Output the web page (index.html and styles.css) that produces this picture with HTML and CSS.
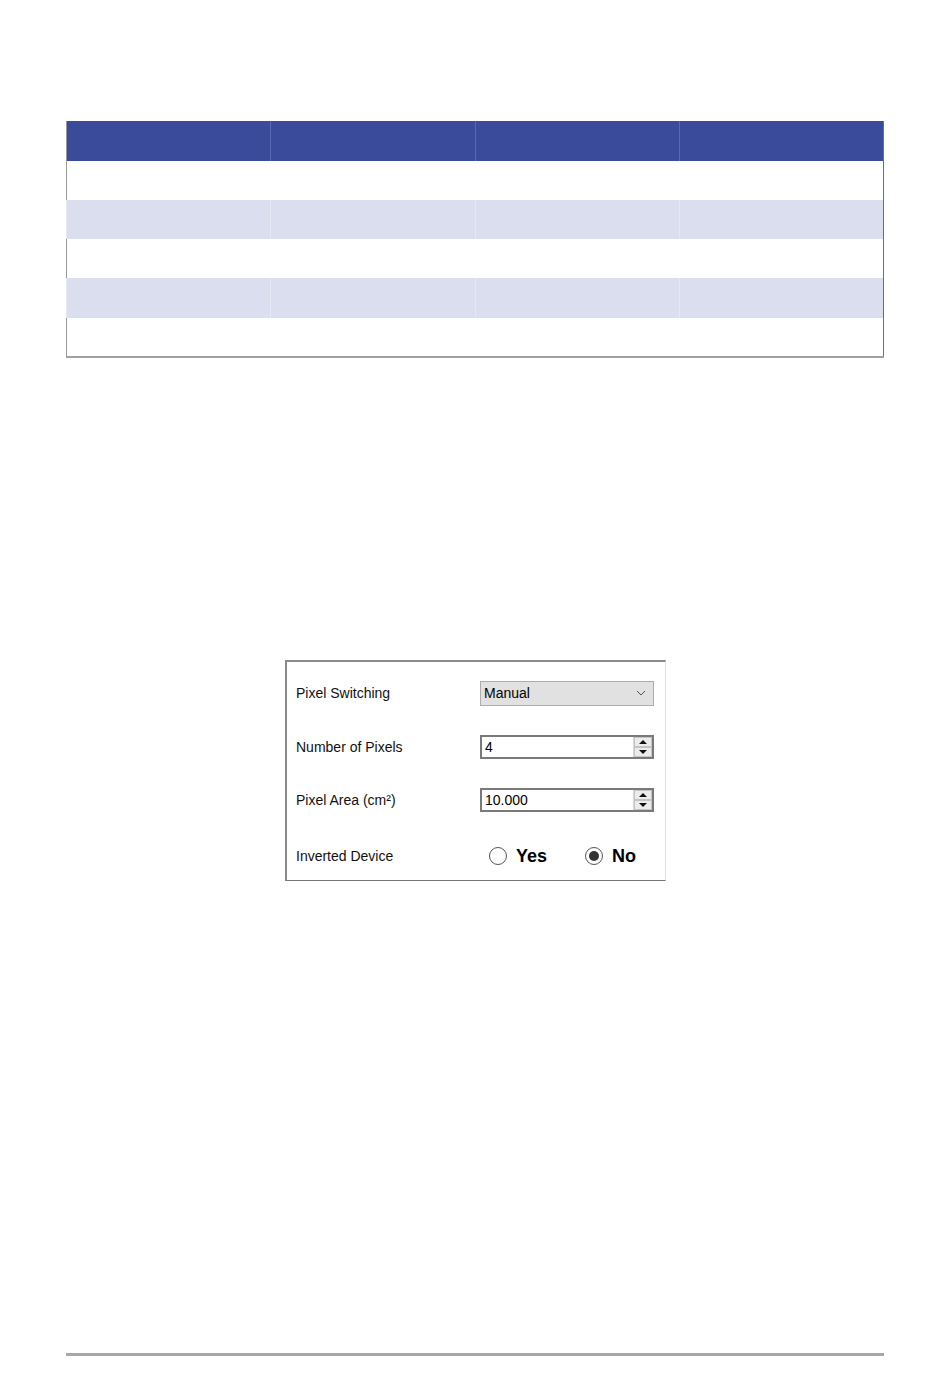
FILE: index.html
```html
<html>

<head>
  <link rel="stylesheet" href="styles.css">
</head>

<body>
  <div class="page">
    <table class="grid">
      <thead>
        <tr>
          <th></th>
          <th></th>
          <th></th>
          <th></th>
        </tr>
      </thead>
      <tbody>
        <tr><td></td><td></td><td></td><td></td></tr>
        <tr><td></td><td></td><td></td><td></td></tr>
        <tr><td></td><td></td><td></td><td></td></tr>
        <tr><td></td><td></td><td></td><td></td></tr>
        <tr><td></td><td></td><td></td><td></td></tr>
      </tbody>
    </table>

    <div class="panel">
      <div class="row">
        <span class="label">Pixel Switching</span>
        <div class="combo">
          <span>Manual</span>
          <svg class="chevron" viewBox="0 0 10 6" width="10" height="6">
            <path d="M1 1l4 4 4-4" fill="none" stroke="#555" stroke-width="1"></path>
          </svg>
        </div>
      </div>
      <div class="row">
        <span class="label">Number of Pixels</span>
        <div class="spin">
          <span class="spin-value">4</span>
          <div class="spin-buttons">
            <div class="spin-btn"><span class="arrow-up"></span></div>
            <div class="spin-btn"><span class="arrow-down"></span></div>
          </div>
        </div>
      </div>
      <div class="row">
        <span class="label">Pixel Area (cm²)</span>
        <div class="spin">
          <span class="spin-value">10.000</span>
          <div class="spin-buttons">
            <div class="spin-btn"><span class="arrow-up"></span></div>
            <div class="spin-btn"><span class="arrow-down"></span></div>
          </div>
        </div>
      </div>
      <div class="row row-last">
        <span class="label">Inverted Device</span>
        <div class="radios">
          <label class="radio"><span class="dot"></span>Yes</label>
          <label class="radio"><span class="dot checked"></span>No</label>
        </div>
      </div>
    </div>

    <div class="spacer"></div>
    <div class="footer-line"></div>
  </div>
</body>

</html>
```

FILE: styles.css
```css
* {
  margin: 0;
  padding: 0;
  box-sizing: border-box;
}

body {
  background: #fff;
  font-family: "Liberation Sans", Arial, sans-serif;
  color: #000;
}

.page {
  width: 950px;
  height: 1397px;
  display: flex;
  flex-direction: column;
  padding: 121px 66px 0 66px;
}

/* striped table, empty cells */
.grid {
  width: 818px;
  border-collapse: collapse;
  table-layout: fixed;
  border-left: 1px solid #9a9a9a;
  border-right: 1px solid #6f6f6f;
  border-bottom: 2px solid #a0a0a0;
}

.grid th {
  height: 40px;
  background: #394b9a;
  border-left: 1px solid #5869b0;
}

.grid th:first-child,
.grid td:first-child {
  border-left: none;
}

.grid td {
  height: 39px;
  background: #fff;
}

.grid tbody tr:nth-child(4) td {
  height: 40px;
}

.grid tbody tr:nth-child(even) td {
  background: #dadeef;
  border-left: 1px solid #e5e8f4;
}

.panel {
  align-self: flex-start;
  margin: 302px 0 0 219px;
  width: 381px;
  height: 221px;
  border-top: 2px solid #8a8a8a;
  border-left: 2px solid #8a8a8a;
  border-bottom: 1px solid #777;
  border-right: 1px solid #e0e0e0;
  padding: 4px 0 0 9px;
  display: flex;
  flex-direction: column;
  font-size: 14px;
}

.row {
  height: 54px;
  display: flex;
  align-items: center;
}

.row:nth-child(3) {
  height: 52px;
}

.row-last {
  flex: 1;
  padding-top: 6px;
}

.label {
  width: 184px;
  color: #111;
}

.combo {
  width: 174px;
  height: 25px;
  background: #e1e1e1;
  border: 1px solid #adadad;
  display: flex;
  align-items: center;
  justify-content: space-between;
  padding: 0 7px 0 3px;
}

.spin {
  width: 174px;
  height: 24px;
  border: 2px solid #7a7a7a;
  display: flex;
  align-items: center;
  justify-content: space-between;
  background: #fff;
}

.spin-value {
  padding-left: 3px;
}

.spin-buttons {
  width: 19px;
  height: 100%;
  display: flex;
  flex-direction: column;
  border-left: 1px solid #d8d8d8;
  background: #e8e8e8;
}

.spin-btn {
  flex: 1;
  display: flex;
  align-items: center;
  justify-content: center;
  border: 1px solid #c4c4c4;
  background: #ececec;
}

.arrow-up {
  width: 0;
  height: 0;
  border-left: 4px solid transparent;
  border-right: 4px solid transparent;
  border-bottom: 4px solid #111;
}

.arrow-down {
  width: 0;
  height: 0;
  border-left: 4px solid transparent;
  border-right: 4px solid transparent;
  border-top: 4px solid #111;
}

.radios {
  display: flex;
  gap: 38px;
  padding-left: 9px;
}

.radio {
  display: flex;
  align-items: center;
  gap: 9px;
  font-weight: 700;
  font-size: 18px;
}

.dot {
  width: 18px;
  height: 18px;
  border-radius: 50%;
  border: 1px solid #555;
  background: #fff;
  display: flex;
  align-items: center;
  justify-content: center;
}

.dot.checked::after {
  content: "";
  width: 10px;
  height: 10px;
  border-radius: 50%;
  background: #333;
}

.spacer {
  flex: 1;
}

.footer-line {
  width: 818px;
  height: 3px;
  background: #a8a8a8;
  margin-bottom: 41px;
}
```
